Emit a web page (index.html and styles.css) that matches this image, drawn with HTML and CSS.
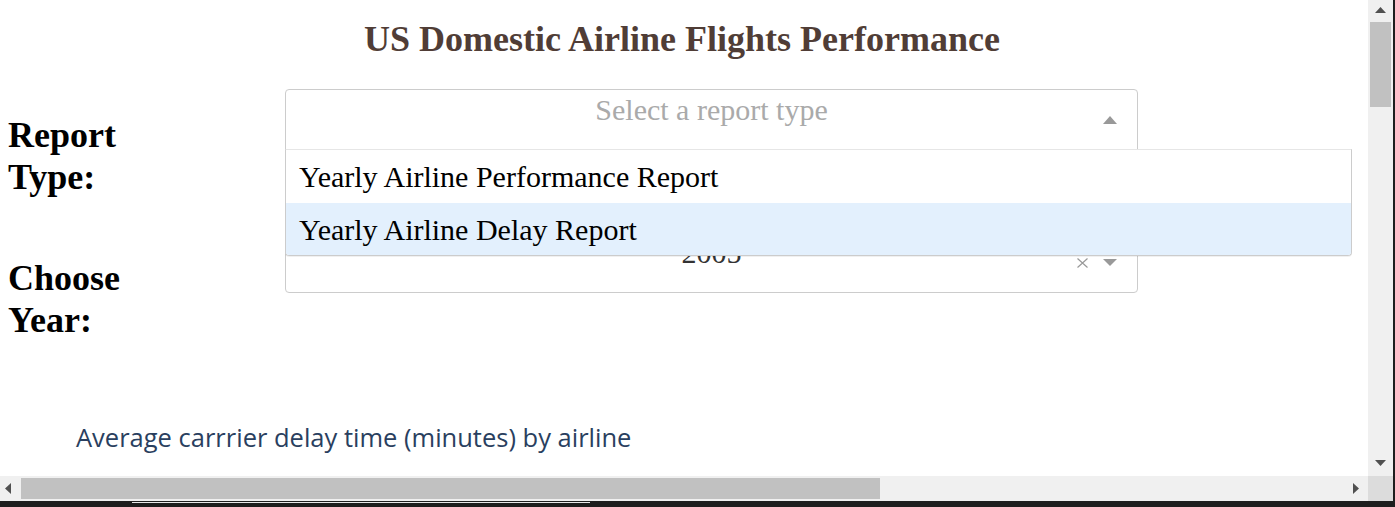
FILE: index.html
```html
<!DOCTYPE html>
<html lang="en">
<head>
<meta charset="utf-8">
<title>US Domestic Airline Flights Performance</title>
<link rel="stylesheet" href="styles.css">
</head>
<body>
<div class="window">
  <div class="viewport">
    <h1 class="title">US Domestic Airline Flights Performance</h1>

    <div class="row">
      <h2 class="label">Report Type:</h2>
      <div class="select is-open">
        <div class="control">
          <span class="placeholder">Select a report type</span>
          <span class="indicators">
            <svg class="arrow" width="14" height="8" viewBox="0 0 14 8"><polygon points="0,8 14,8 7,0" /></svg>
          </span>
        </div>
        <div class="menu">
          <div class="option">Yearly Airline Performance Report</div>
          <div class="option is-focused">Yearly Airline Delay Report</div>
        </div>
      </div>
    </div>

    <div class="row">
      <h2 class="label">Choose Year:</h2>
      <div class="select">
        <div class="control">
          <span class="value">2005</span>
          <span class="indicators">
            <svg class="clear" width="11" height="10" viewBox="0 0 11 10"><path d="M0.5 0.5 L10.5 9.5 M10.5 0.5 L0.5 9.5" /></svg>
            <svg class="arrow" width="14" height="7" viewBox="0 0 14 7"><polygon points="0,0 14,0 7,7" /></svg>
          </span>
        </div>
      </div>
    </div>

    <div class="graph">
      <div class="graph-title">Average carrrier delay time (minutes) by airline</div>
    </div>
  </div>

  <div class="vscroll">
    <svg class="sb-arrow" width="11" height="6" viewBox="0 0 11 6"><polygon points="0,6 11,6 5.5,0" /></svg>
    <div class="vthumb"></div>
    <svg class="sb-arrow sb-down" width="11" height="6" viewBox="0 0 11 6"><polygon points="0,0 11,0 5.5,6" /></svg>
  </div>
  <div class="edge"></div>

  <div class="hscroll">
    <svg class="sb-arrow" width="6" height="11" viewBox="0 0 6 11"><polygon points="6,0 6,11 0,5.5" /></svg>
    <div class="hthumb"></div>
    <svg class="sb-arrow sb-right" width="6" height="11" viewBox="0 0 6 11"><polygon points="0,0 0,11 6,5.5" /></svg>
  </div>
  <div class="corner"></div>
  <div class="edge"></div>

  <div class="taskbar"><div class="taskbar-line"></div></div>
</div>
</body>
</html>
```

FILE: styles.css
```css
html, body {
  margin: 0;
  padding: 0;
  background: #1e1e1e;
}

.window {
  width: 1395px;
  height: 507px;
  display: grid;
  grid-template-columns: 1368px 25px 2px;
  grid-template-rows: 476px 25px 6px;
  background: #1e1e1e;
  overflow: hidden;
}

.viewport {
  background: #ffffff;
  padding: 0 8px;
  overflow: hidden;
  font-family: "Liberation Serif", "Times New Roman", serif;
}

.title {
  margin: 19px 0 0;
  padding-right: 4px;
  font-size: 36px;
  line-height: 40px;
  font-weight: bold;
  text-align: center;
  color: #503d36;
}

.row {
  display: grid;
  grid-template-columns: 277px 853px;
  align-items: start;
  margin-top: 30px;
}

.row + .row {
  margin-top: 0;
}

.label {
  margin: 24.5px 0 34.5px;
  width: 150px;
  font-size: 36px;
  line-height: 42px;
  font-weight: bold;
  color: #000000;
}

.select {
  position: relative;
}

.control {
  box-sizing: border-box;
  height: 61px;
  border: 1px solid #cccccc;
  border-radius: 4px;
  background: #ffffff;
  display: grid;
  grid-template-areas: "stack";
}

.is-open .control {
  border-bottom-left-radius: 0;
  border-bottom-right-radius: 0;
}

.placeholder,
.value,
.indicators {
  grid-area: stack;
}

.placeholder {
  justify-self: center;
  align-self: start;
  margin-top: 3px;
  font-size: 30px;
  line-height: 34px;
  color: #aaaaaa;
}

.value {
  justify-self: center;
  align-self: start;
  margin-top: 3px;
  font-size: 30px;
  line-height: 34px;
  color: #333333;
}

.indicators {
  justify-self: end;
  align-self: center;
  display: flex;
  align-items: center;
  gap: 15px;
  padding-right: 20px;
}

.arrow {
  display: block;
  fill: #999999;
}

.clear {
  display: block;
  stroke: #999999;
  stroke-width: 1.2;
  fill: none;
}

.menu {
  position: absolute;
  top: 60px;
  left: 0;
  width: 1067px;
  box-sizing: border-box;
  background: #ffffff;
  border: 1px solid #cccccc;
  border-top-color: #e6e6e6;
  border-bottom-left-radius: 4px;
  border-bottom-right-radius: 4px;
  box-shadow: 0 1px 0 rgba(0, 0, 0, 0.06);
  z-index: 2;
  overflow: hidden;
}

.option {
  box-sizing: border-box;
  height: 52.5px;
  display: flex;
  align-items: center;
  padding: 2px 0 0 13px;
  font-size: 30px;
  line-height: 34px;
  color: #000000;
}

.option.is-focused {
  background: #e3f0fd;
}

.graph {
  margin-top: 46px;
  padding-left: 68px;
}

.graph-title {
  font-family: "Open Sans", "Liberation Sans", sans-serif;
  font-size: 25.5px;
  line-height: 32px;
  color: #2a3f5f;
}

/* scrollbars */
.vscroll {
  background: #f0f0f0;
  display: flex;
  flex-direction: column;
  align-items: center;
  padding-top: 7px;
  box-sizing: border-box;
}

.sb-arrow {
  display: block;
  fill: #505050;
  flex: none;
}

.vthumb {
  margin-top: 9px;
  width: 21px;
  height: 85px;
  background: #c1c1c1;
}

.sb-down {
  margin-top: auto;
  margin-bottom: 10px;
}

.hscroll {
  background: #f0f0f0;
  display: flex;
  align-items: center;
  padding-left: 5px;
}

.hthumb {
  margin-left: 10px;
  width: 859px;
  height: 21px;
  background: #c1c1c1;
}

.sb-right {
  margin-left: auto;
  margin-right: 9px;
}

.corner {
  background: #dcdcdc;
}

.edge {
  background: #1e1e1e;
}

.taskbar {
  grid-column: 1 / 4;
  background: #1e1e1e;
}

.taskbar-line {
  margin: 1px 0 0 132px;
  width: 458px;
  height: 1px;
  background: #e8e8e8;
}
```
